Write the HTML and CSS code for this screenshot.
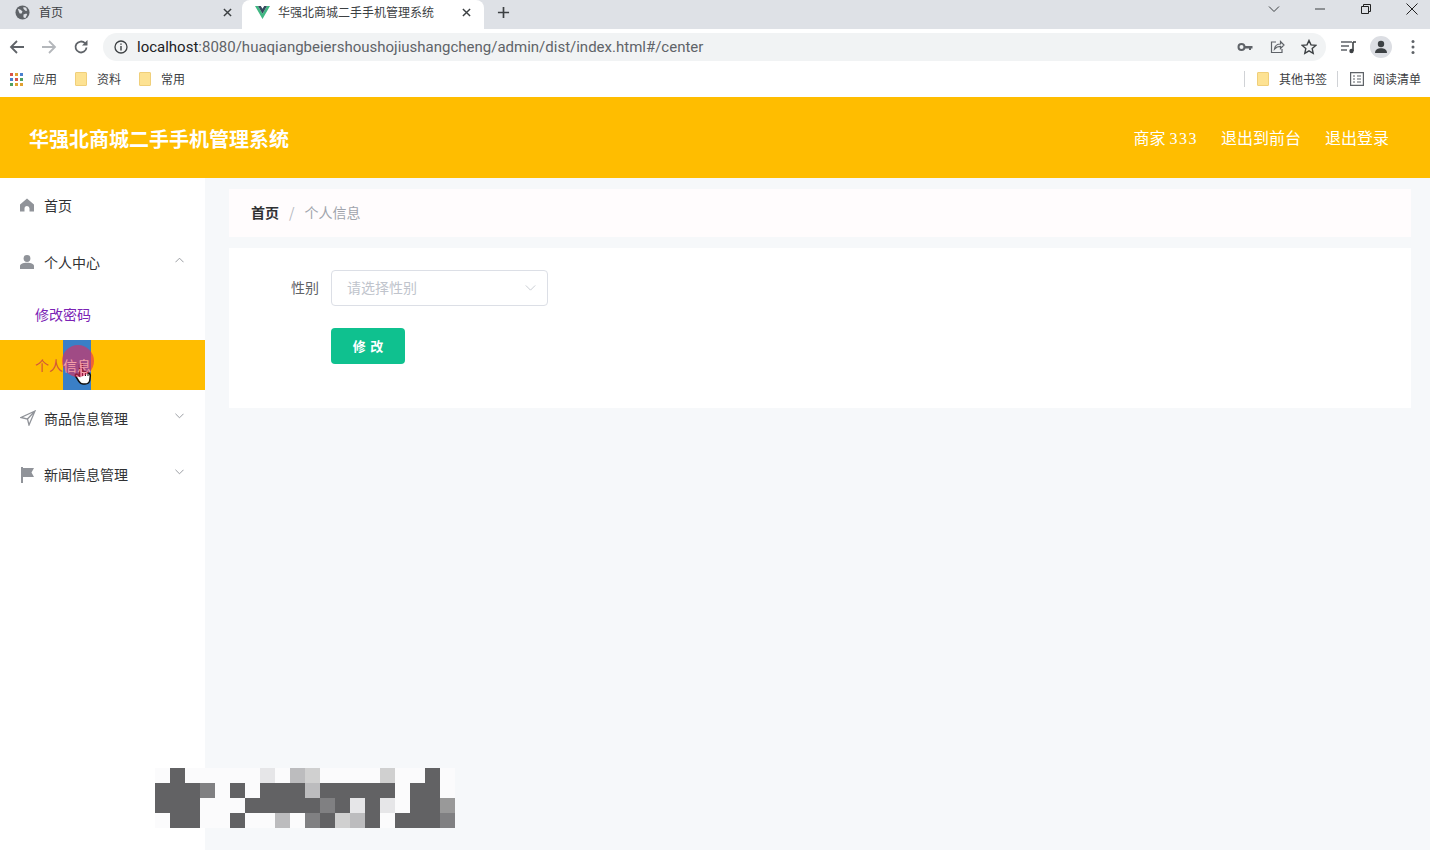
FILE: index.html
```html
<!DOCTYPE html>
<html lang="zh-CN">
<head>
    <meta charset="UTF-8">
    <title>华强北商城二手手机管理系统</title>
    <link rel="stylesheet" href="styles.css">
</head>
<body>
    <div class="browser">
        <div class="tabs">
            <div class="tab">
                <svg class="tab-icon" viewBox="0 0 16 16"><circle cx="8" cy="8" r="7.500" fill="#5f6368"/><path d="M3 4l3 1 2 2-1 2-2 0-1-2zM9 2l3 1 1 3-2 0-2-2zM9 10l3-1 1 1-2 4-2-1z" fill="#dee1e6"/></svg>
                <span class="tab-title">首页</span>
                <svg class="tab-close" viewBox="0 0 10 10"><path d="M1 1l8 8M9 1l-8 8" stroke="#3c4043" stroke-width="1.600"/></svg>
            </div>
            <div class="tab tab-active">
                <svg class="tab-icon" viewBox="0 0 16 14"><path d="M0 0h3.200L8 8.200 12.800 0H16L8 14z" fill="#41b883"/><path d="M3.200 0h3L8 3.100 9.800 0h3L8 8.200z" fill="#35495e"/></svg>
                <span class="tab-title">华强北商城二手手机管理系统</span>
                <svg class="tab-close" viewBox="0 0 10 10"><path d="M1 1l8 8M9 1l-8 8" stroke="#3c4043" stroke-width="1.600"/></svg>
            </div>
            <svg class="tab-new" viewBox="0 0 14 14"><path d="M7 1v12M1 7h12" stroke="#3c4043" stroke-width="1.800"/></svg>
            <div class="win-controls">
                <svg class="win-icon" viewBox="0 0 12 12"><path d="M1 3.500l5 5 5-5" fill="none" stroke="#3c4043"/></svg>
                <svg class="win-icon" viewBox="0 0 12 12"><path d="M1 6h10" stroke="#3c4043"/></svg>
                <svg class="win-icon" viewBox="0 0 12 12"><path d="M1.500 3.500h7v7h-7zM3.500 3.500v-2h7v7h-2" fill="none" stroke="#222"/></svg>
                <svg class="win-icon" viewBox="0 0 12 12"><path d="M.5.500l11 11M11.500.500l-11 11" stroke="#222"/></svg>
            </div>
        </div>
        <div class="toolbar">
            <svg class="nav-icon" viewBox="0 0 16 16"><path d="M15 8H2M8 2L2 8l6 6" fill="none" stroke="#5f6368" stroke-width="1.800"/></svg>
            <svg class="nav-icon" viewBox="0 0 16 16"><path d="M1 8h13M8 2l6 6-6 6" fill="none" stroke="#b4b7bb" stroke-width="1.800"/></svg>
            <svg class="nav-icon" viewBox="0 0 16 16"><path d="M13.500 8.500A5.500 5.500 0 1 1 12 4.200" fill="none" stroke="#5f6368" stroke-width="1.800"/><path d="M14.500 1v5.500H9z" fill="#5f6368"/></svg>
            <div class="omnibox">
                <svg class="info-icon" viewBox="0 0 14 14"><circle cx="7" cy="7" r="6" fill="none" stroke="#3c4043" stroke-width="1.300"/><path d="M7 6v4.500M7 3.500v1.300" stroke="#3c4043" stroke-width="1.400"/></svg>
                <span class="url"><b>localhost</b>:8080/huaqiangbeiershoushojiushangcheng/admin/dist/index.html#/center</span>
                <div class="omni-actions">
                    <svg class="omni-icon" viewBox="0 0 16 16"><circle cx="4.500" cy="8" r="3" fill="none" stroke="#5f6368" stroke-width="2"/><path d="M7.500 7h8v2.500h-1.500V11h-2V9.500H7.500z" fill="#5f6368"/></svg>
                    <svg class="omni-icon" viewBox="0 0 16 16"><path d="M7 3H2.500v10.500h10.500V10" fill="none" stroke="#5f6368" stroke-width="1.200"/><path d="M5.500 10c.5-3.500 3-5 6-5V2.500l3.500 3.500-3.500 3.500V7.300c-2.500 0-4.500 1-6 2.700z" fill="none" stroke="#5f6368" stroke-width="1.200"/></svg>
                    <svg class="omni-icon" viewBox="0 0 16 16"><path d="M8 1.500l2 4.400 4.800.5-3.600 3.200 1 4.700L8 11.900l-4.200 2.400 1-4.700L1.200 6.400 6 5.900z" fill="none" stroke="#3c4043" stroke-width="1.400"/></svg>
                </div>
            </div>
            <svg class="media-icon" viewBox="0 0 16 14"><path d="M0 2h11M0 6h8M0 10h6" stroke="#5f6368" stroke-width="1.400"/><path d="M12 2h3M12 2v9" stroke="#3c4043" stroke-width="1.600"/><circle cx="10.500" cy="11" r="2.200" fill="#3c4043"/></svg>
            <div class="avatar">
                <svg viewBox="0 0 16 16"><circle cx="8" cy="5" r="3.200" fill="#3c4043"/><path d="M2 14c0-3.500 3-4.800 6-4.800s6 1.300 6 4.800z" fill="#3c4043"/></svg>
            </div>
            <svg class="dots" viewBox="0 0 4 16"><circle cx="2" cy="2.500" r="1.500" fill="#5f6368"/><circle cx="2" cy="8" r="1.500" fill="#5f6368"/><circle cx="2" cy="13.500" r="1.500" fill="#5f6368"/></svg>
        </div>
        <div class="bookmarks">
            <svg class="apps-icon" viewBox="0 0 13 13">
                <rect x="0" y="0" width="3" height="3" fill="#d9534a"/><rect x="5" y="0" width="3" height="3" fill="#e0a030"/><rect x="10" y="0" width="3" height="3" fill="#4a80d0"/>
                <rect x="0" y="5" width="3" height="3" fill="#4a80d0"/><rect x="5" y="5" width="3" height="3" fill="#d9534a"/><rect x="10" y="5" width="3" height="3" fill="#4fa060"/>
                <rect x="0" y="10" width="3" height="3" fill="#4fa060"/><rect x="5" y="10" width="3" height="3" fill="#e0a030"/><rect x="10" y="10" width="3" height="3" fill="#e0a030"/>
            </svg>
            <span class="bm-label bm-apps">应用</span>
            <span class="folder"></span><span class="bm-label bm-data">资料</span>
            <span class="folder"></span><span class="bm-label">常用</span>
            <div class="bm-right">
                <span class="bm-sep"></span>
                <span class="folder"></span><span class="bm-label bm-other">其他书签</span>
                <span class="bm-sep"></span>
                <svg class="read-icon" viewBox="0 0 14 14"><path d="M.6.6h12.800v12.800H.6zM3 4h2M3 7h2M3 10h2M7 4h4M7 7h4M7 10h4" fill="none" stroke="#5f6368" stroke-width="1.200"/></svg>
                <span class="bm-label">阅读清单</span>
            </div>
        </div>
    </div>

    <header class="app-header">
        <h1>华强北商城二手手机管理系统</h1>
        <nav class="user-nav">
            <span>商家<span class="user-num">333</span></span>
            <span>退出到前台</span>
            <span>退出登录</span>
        </nav>
    </header>

    <div class="app-body">
        <aside class="sidebar">
            <div class="menu-item">
                <svg class="menu-icon" viewBox="0 0 14 14"><path d="M7 .5L14 6.500V13.500H9.500V10.500a2.500 2.500 0 0 0-5 0V13.500H0V6.500z" fill="#909399"/></svg>
                <span>首页</span>
            </div>
            <div class="menu-item">
                <svg class="menu-icon" viewBox="0 0 14 14"><circle cx="7" cy="3.500" r="3.400" fill="#909399"/><path d="M0 14V11c0-2 2.500-3.300 7-3.300S14 9 14 11v3z" fill="#909399"/></svg>
                <span>个人中心</span>
                <svg class="menu-arrow" viewBox="0 0 10 6"><path d="M.5 5.500L5 1l4.500 4.500" fill="none" stroke="#909399"/></svg>
            </div>
            <div class="sub-item sub-link">修改密码</div>
            <div class="sub-item sub-active">
                <span class="selection"></span>
                <svg class="hand" viewBox="0 0 18 24"><path d="M6 2c1-1 2.500-.5 2.500 1v6l5 1.500c2 .6 3 1.500 2.800 3.500l-.5 4c-.3 2.500-2 4-4.800 4H9c-2 0-3-1-4-2.500L1.500 14c-.8-1.200.8-2.500 2-1.500L5.500 14V3z" fill="#fff" stroke="#111" stroke-width="1.500"/><path d="M8.500 9v5M11.500 10v4M14 11v3" stroke="#111"/></svg>
                <span class="click-dot"></span>
                <span class="sub-text">个人<span class="sub-selected">信息</span></span>
            </div>
            <div class="menu-item">
                <svg class="menu-icon menu-icon-send" viewBox="0 0 16 16"><path d="M15 1L1 7.500l6.500 1.500L9 15z M15 1L7.500 9" fill="none" stroke="#909399" stroke-width="1.300"/></svg>
                <span>商品信息管理</span>
                <svg class="menu-arrow" viewBox="0 0 10 6"><path d="M.5.500L5 5l4.500-4.500" fill="none" stroke="#909399"/></svg>
            </div>
            <div class="menu-item">
                <svg class="menu-icon menu-icon-flag" viewBox="0 0 14 16"><path d="M1 0h2v16H1z" fill="#909399"/><path d="M3 1H14l-2.500 4.500L14 10H3z" fill="#909399"/></svg>
                <span>新闻信息管理</span>
                <svg class="menu-arrow" viewBox="0 0 10 6"><path d="M.5.500L5 5l4.500-4.500" fill="none" stroke="#909399"/></svg>
            </div>
        </aside>

        <main class="content">
            <div class="breadcrumb">
                <span class="crumb-home">首页</span>
                <span class="crumb-sep">/</span>
                <span class="crumb-now">个人信息</span>
            </div>
            <section class="form-card">
                <div class="form-row">
                    <label class="form-label">性别</label>
                    <div class="select">
                        <span>请选择性别</span>
                        <svg class="select-arrow" viewBox="0 0 12 7"><path d="M.5.500L6 6l5.500-5.500" fill="none" stroke="#c0c4cc"/></svg>
                    </div>
                </div>
                <div class="form-row">
                    <span class="form-label"></span>
                    <button class="btn">修 改</button>
                </div>
            </section>
        </main>
    </div>

    <div class="mosaic">
        <i class="w"></i><i class="d"></i><i class="w"></i><i class="w"></i><i class="w"></i><i class="w"></i><i class="w"></i><i class="l1"></i><i class="w"></i><i class="l3"></i><i class="l2"></i><i class="w"></i><i class="w"></i><i class="w"></i><i class="w"></i><i class="l2"></i><i class="w"></i><i class="w"></i><i class="d"></i><i class="w"></i>
        <i class="d"></i><i class="d"></i><i class="d"></i><i class="m"></i><i class="w"></i><i class="d"></i><i class="w"></i><i class="d"></i><i class="d"></i><i class="d"></i><i class="l3"></i><i class="d"></i><i class="d"></i><i class="d"></i><i class="d"></i><i class="d"></i><i class="w"></i><i class="d"></i><i class="d"></i><i class="w"></i>
        <i class="d"></i><i class="d"></i><i class="d"></i><i class="w"></i><i class="w"></i><i class="w"></i><i class="d"></i><i class="d"></i><i class="d"></i><i class="d"></i><i class="d"></i><i class="m"></i><i class="d"></i><i class="l1"></i><i class="d"></i><i class="l1"></i><i class="w"></i><i class="d"></i><i class="d"></i><i class="m2"></i>
        <i class="w"></i><i class="d"></i><i class="d"></i><i class="w"></i><i class="w"></i><i class="d"></i><i class="w"></i><i class="w"></i><i class="l3"></i><i class="w"></i><i class="m"></i><i class="d"></i><i class="l2"></i><i class="l3"></i><i class="d"></i><i class="w"></i><i class="d"></i><i class="d"></i><i class="d"></i><i class="m"></i>
    </div>
</body>
</html>
```

FILE: styles.css
```css
:root {
    --yellow: #ffbd00;
    --page-bg: #f6f8fa;
    --chrome-bg: #dee1e6;
    --text-color: #303133;
}

* {
    margin: 0;
    padding: 0;
    box-sizing: border-box;
}

body {
    width: 1430px;
    height: 850px;
    overflow: hidden;
    position: relative;
    font-family: "Noto Sans CJK SC", "Liberation Sans", sans-serif;
    background-color: var(--page-bg);
    color: var(--text-color);
}

/* browser chrome */
.browser {
    height: 97px;
    background: #fff;
}

.tabs {
    height: 29px;
    display: flex;
    align-items: center;
    background: var(--chrome-bg);
}

.tab {
    width: 242px;
    height: 29px;
    display: flex;
    align-items: center;
    padding: 0 9px 5px 15px;
    font-size: 12px;
    color: #3c4043;
}

.tab-active {
    background: #fff;
    border-radius: 8px 8px 0 0;
    padding-left: 13px;
}

.tab-icon {
    width: 15px;
    height: 15px;
    flex: none;
}

.tab-title {
    margin-left: 9px;
    padding-bottom: 2px;
    flex: 1;
}

.tab-active .tab-title {
    margin-left: 8px;
}

.tab-close {
    width: 9px;
    height: 9px;
    margin-right: 1px;
}

.tab-active .tab-close {
    margin-right: 4px;
}

.tab-new {
    width: 13px;
    height: 13px;
    margin-left: 13px;
    margin-bottom: 4px;
}

.win-controls {
    margin-left: auto;
    display: flex;
    gap: 34px;
    padding: 0 12px 12px 0;
}

.win-icon {
    width: 12px;
    height: 12px;
}

.toolbar {
    height: 34px;
    display: flex;
    align-items: center;
    padding-top: 2px;
}

.nav-icon {
    width: 16px;
    height: 16px;
    margin-left: 9px;
    margin-right: 7px;
}

.nav-icon + .nav-icon {
    margin-left: 9px;
}

.omnibox {
    width: 1223px;
    height: 28px;
    margin-left: 7px;
    padding: 0 9px 0 11px;
    display: flex;
    align-items: center;
    background: #f1f3f4;
    border-radius: 14px;
}

.info-icon {
    width: 14px;
    height: 14px;
}

.url {
    margin-left: 9px;
    font-family: Roboto, "Liberation Sans", sans-serif;
    font-size: 15px;
    color: #5f6368;
}

.url b {
    font-weight: 400;
    color: #202124;
}

.omni-actions {
    margin-left: auto;
    display: flex;
    gap: 16px;
}

.omni-icon {
    width: 16px;
    height: 16px;
}

.media-icon {
    width: 16px;
    height: 14px;
    margin-left: 15px;
}

.avatar {
    width: 22px;
    height: 22px;
    margin-left: 13px;
    padding: 3px;
    border-radius: 50%;
    background: #dcdee3;
}

.avatar svg {
    display: block;
}

.dots {
    width: 4px;
    height: 16px;
    margin-left: 19px;
}

.bookmarks {
    height: 34px;
    display: flex;
    align-items: center;
    padding: 0 0 2px 10px;
    font-size: 12px;
    color: #3c4043;
}

.apps-icon {
    width: 13px;
    height: 13px;
}

.bm-label {
    margin-left: 10px;
    line-height: 14px;
}

.bm-apps {
    margin-right: 18px;
}

.bm-data {
    margin-right: 18px;
}

.folder {
    width: 12px;
    height: 14px;
    border: 1px solid #f0cf7a;
    background-color: #fde293;
    border-radius: 1px;
}

.bm-right {
    margin-left: auto;
    display: flex;
    align-items: center;
    padding-right: 9px;
}

.bm-sep {
    width: 1px;
    height: 16px;
    background: #d0d2d6;
    margin-right: 12px;
}

.bm-other {
    margin-right: 10px;
}

.read-icon {
    width: 14px;
    height: 14px;
    margin-right: -1px;
}

/* app */
.app-header {
    height: 81px;
    display: flex;
    align-items: center;
    justify-content: space-between;
    padding: 0 41px 0 29px;
    background: var(--yellow);
    color: #fff;
}

.app-header h1 {
    font-size: 20px;
    font-weight: 700;
    padding-top: 1px;
}

.user-nav {
    display: flex;
    gap: 24px;
    padding-bottom: 2px;
    font-family: "Liberation Serif", "Noto Sans CJK SC", serif;
    font-size: 16px;
    white-space: nowrap;
}

.user-num {
    margin-left: 4px;
    margin-right: -1px;
    letter-spacing: 1.500px;
}

.app-body {
    display: flex;
    height: 672px;
}

.sidebar {
    width: 205px;
    flex: none;
    background: #fff;
}

.menu-item {
    height: 56px;
    display: flex;
    align-items: center;
    padding: 0 20px;
    font-size: 14px;
}

.menu-item:first-child {
    padding-bottom: 2px;
}

.menu-icon {
    width: 14px;
    height: 14px;
    margin-right: 10px;
    flex: none;
}

.menu-icon-send {
    width: 16px;
    height: 16px;
    margin-right: 8px;
}

.menu-icon-flag {
    height: 16px;
    margin-top: 2px;
}

.menu-arrow {
    width: 9px;
    height: 6px;
    margin-left: auto;
    margin-right: 1px;
    margin-bottom: 4px;
}

.sub-item {
    height: 50px;
    display: flex;
    align-items: center;
    padding: 0 0 2px 35px;
    font-size: 14px;
}

.sub-link {
    color: #7b23b5;
}

.sub-active {
    position: relative;
    background: var(--yellow);
    color: #d2553c;
    padding-bottom: 0;
}

.sub-text {
    position: relative;
}

.sub-selected {
    color: #f3a0a8;
}

.selection {
    position: absolute;
    left: 63px;
    top: 0;
    width: 28px;
    height: 50px;
    background: #3a7fc6;
}

.click-dot {
    position: absolute;
    left: 62px;
    top: 5px;
    width: 32px;
    height: 32px;
    border-radius: 50%;
    background: rgba(228, 40, 90, 0.6);
}

.hand {
    position: absolute;
    left: 74px;
    top: 22px;
    width: 18px;
    height: 24px;
}

.content {
    flex: 1;
    padding: 11px 19px 0 24px;
}

.breadcrumb {
    height: 48px;
    display: flex;
    align-items: center;
    padding: 0 0 2px 22px;
    background: #fffcfd;
    font-size: 14px;
}

.crumb-home {
    font-weight: 700;
    color: #303133;
}

.crumb-sep {
    margin: 0 10px;
    color: #b4b8c0;
}

.crumb-now {
    color: #a0a4ac;
}

.form-card {
    height: 160px;
    margin-top: 11px;
    padding-top: 22px;
    background: #fff;
}

.form-row {
    display: flex;
    align-items: center;
    margin-bottom: 22px;
}

.form-label {
    width: 90px;
    margin-right: 12px;
    padding-bottom: 2px;
    text-align: right;
    font-size: 14px;
    color: #606266;
}

.select {
    width: 217px;
    height: 36px;
    display: flex;
    align-items: center;
    justify-content: space-between;
    padding: 0 11px 2px 15px;
    border: 1px solid #dcdfe6;
    border-radius: 4px;
    background: #fff;
    font-size: 14px;
    color: #c0c4cc;
}

.select-arrow {
    width: 11px;
    height: 6px;
    margin-top: 2px;
}

.btn {
    width: 74px;
    height: 36px;
    padding-bottom: 2px;
    border: 0;
    border-radius: 4px;
    background: #0fc18f;
    color: #fff;
    font-family: inherit;
    font-size: 13px;
    font-weight: 700;
    word-spacing: 1.500px;
}

/* pixelated block near the bottom */
.mosaic {
    position: absolute;
    left: 155px;
    top: 768px;
    display: grid;
    grid-template-columns: repeat(20, 15px);
    grid-auto-rows: 15px;
}

.mosaic .d { background: #626264; }
.mosaic .m { background: #808082; }
.mosaic .m2 { background: #999; }
.mosaic .l3 { background: #bcbcbe; }
.mosaic .l2 { background: #d0d0d0; }
.mosaic .l1 { background: #e6e6e8; }
.mosaic .w { background: #fbfbfc; }
```
